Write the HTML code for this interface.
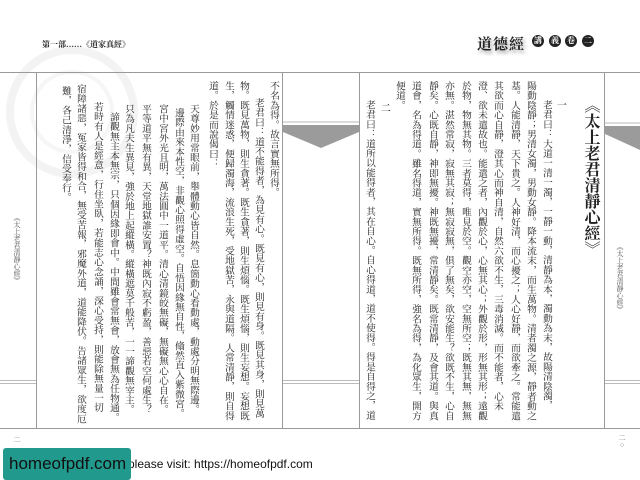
<!DOCTYPE html>
<html><head><meta charset="utf-8"><style>
html,body{margin:0;padding:0;background:#fff;}
body{width:640px;height:480px;position:relative;overflow:hidden;font-family:"Liberation Serif","Noto Serif CJK SC",serif;color:#222;}
.c{position:absolute;writing-mode:vertical-rl;font-size:9.7px;line-height:10px;width:10px;white-space:nowrap;letter-spacing:0;}
.ln{position:absolute;background:#9a9a9a;}
.circ{position:absolute;width:12px;height:12px;border-radius:50%;background:#222;color:#fff;font-size:8px;line-height:12px;text-align:center;top:35px;font-weight:bold;}
</style></head><body>
<svg style="position:absolute;left:0;top:0" width="640" height="480">
<circle cx="72" cy="112" r="62" fill="none" stroke="#f3f3f3" stroke-width="8"/>
<circle cx="72" cy="112" r="40" fill="none" stroke="#f6f6f6" stroke-width="4"/>
<rect x="283" y="121" width="76" height="2" fill="#dcdcdc"/>
<polygon points="283,125 359,125 359,132 321,148 283,132" fill="#9b9b9b"/>
<rect x="605" y="122" width="35" height="2" fill="#dcdcdc"/>
<polygon points="605,126 640,126 640,150 605,134" fill="#9b9b9b"/>
<rect x="283" y="380" width="76" height="1" fill="#bbb"/>
<rect x="283" y="383" width="76" height="1" fill="#bbb"/>
<rect x="0" y="380" width="36" height="1" fill="#bbb"/>
<rect x="0" y="383" width="36" height="1" fill="#bbb"/>
<rect x="605" y="380" width="35" height="1" fill="#bbb"/>
<rect x="605" y="383" width="35" height="1" fill="#bbb"/>
</svg>
<div class="ln" style="left:0;top:72px;width:640px;height:1px"></div>
<div class="ln" style="left:0;top:428px;width:640px;height:1px"></div>
<div class="ln" style="left:36px;top:72px;width:1px;height:356px"></div>
<div class="ln" style="left:282px;top:72px;width:1px;height:356px"></div>
<div class="ln" style="left:359px;top:72px;width:1px;height:356px"></div>
<div class="ln" style="left:604px;top:72px;width:1px;height:356px"></div>

<div style="position:absolute;left:42px;top:39px;font-size:8px;font-weight:bold;white-space:nowrap">第一部……《道家真經》</div>
<div style="position:absolute;left:477px;top:33px;font-size:15px;font-weight:bold;letter-spacing:1px;white-space:nowrap;text-shadow:2px 3px 3px #aaa">道德經</div>
<div class="circ" style="left:532px">講</div>
<div class="circ" style="left:549px">義</div>
<div class="circ" style="left:565px">卷</div>
<div class="circ" style="left:582px">二</div>

<div class="c" style="left:581px;top:97px;font-size:16px;line-height:18px;width:18px;font-weight:bold">《太上老君清靜心經》</div>
<div class="c" style="left:555px;top:100px;font-weight:bold">一</div>
<div class="c" style="left:541px;top:100px">老君曰：大道一清一濁，一靜一動，清靜為本，濁動為末，故陽清陰濁，</div>
<div class="c" style="left:525px;top:81px">陽動陰靜；男清女濁，男動女靜。降本流末，而生萬物。清者濁之源，靜者動之</div>
<div class="c" style="left:509px;top:81px">基。人能清靜，天下貴之。人神好清，而心擾之；人心好靜，而欲牽之。常能遣</div>
<div class="c" style="left:492px;top:81px">其欲而心自靜，澄其心而神自清，自然六欲不生，三毒消滅。而不能者，心未</div>
<div class="c" style="left:476px;top:81px">澄、欲未遣故也。能遣之者，內觀於心，心無其心；外觀於形，形無其形；遠觀</div>
<div class="c" style="left:460px;top:81px">於物，物無其物。三者莫得，唯見於空。觀空亦空，空無所空；既無其無，無無</div>
<div class="c" style="left:443px;top:81px">亦無。湛然常寂，寂無其寂；無寂寂無，俱了無矣，欲安能生？欲既不生，心自</div>
<div class="c" style="left:427px;top:81px">靜矣。心既自靜，神即無擾。神既無擾，常清靜矣。既常清靜，及會其道。與真</div>
<div class="c" style="left:410px;top:81px">道會，名為得道。雖名得道，實無所得。既無所得，強名為得，為化眾生，開方</div>
<div class="c" style="left:394px;top:81px">便道。</div>
<div class="c" style="left:379px;top:103px;font-weight:bold">二</div>
<div class="c" style="left:364px;top:100px">老君曰：道所以能得者，其在自心。自心得道，道不使得。得是自得之，道</div>

<div class="c" style="left:268px;top:81px">不名為得。故言實無所得。</div>
<div class="c" style="left:253px;top:98px">老君曰：道不能得者，為見有心。既見有心，則見有身。既見其身，則見萬</div>
<div class="c" style="left:238px;top:81px">物。既見萬物，則生貪著。既生貪著，則生煩惱。既生煩惱，則生妄想。妄想既</div>
<div class="c" style="left:223px;top:81px">生，觸情迷惑，便歸濁海，流浪生死，受地獄苦，永與道隔。人常清靜，則自得</div>
<div class="c" style="left:207px;top:81px">道。於是而說偈曰：</div>
<div class="c" style="left:188px;top:104px">天尊妙用常眼前，舉體動心皆自然。息箇動心看動處，動處分明無際邊。</div>
<div class="c" style="left:173px;top:108px">邊際由來本性空，非觀心照得虛空。自悟因緣無自性，翛然直入紫微宮。</div>
<div class="c" style="left:157px;top:104px">宮中宮外光且明，萬法圓中一道平。清心清鏡皎無礙，無礙無心心自在。</div>
<div class="c" style="left:140px;top:104px">平等道平無有異，天堂地獄誰安置？神既內寂不虧盈，善惡若空何處生？</div>
<div class="c" style="left:123px;top:104px">只為凡夫生異見，強於地上起縱橫。縱橫遮莫千般苦，一一諦觀無宰主。</div>
<div class="c" style="left:108px;top:112px">諦觀無主本無宗，只個因緣即會中。中間雖會常無會，放會無為任物通。</div>
<div class="c" style="left:92px;top:102px">若時有人是經意，行住坐臥，若能志心念誦，深心受持，則能除無量一切</div>
<div class="c" style="left:75px;top:84px">宿障諸惡，冤家皆得和合，無受苦報，邪魔外道，道能降伏。告諸眾生，欲度厄</div>
<div class="c" style="left:60px;top:86px">難，各己清淨，信受奉行。</div>

<div class="c" style="left:616px;top:243px;font-size:7px;line-height:8px;width:8px;color:#555">《太上老君清靜心經》</div>
<div class="c" style="left:13px;top:214px;font-size:7px;line-height:8px;width:8px;color:#555">《太上老君清靜心經》</div>
<div class="c" style="left:13px;top:436px;font-size:7px;line-height:8px;width:8px;color:#777">二</div>
<div class="c" style="left:618px;top:434px;font-size:7px;line-height:8px;width:8px;color:#777">二○</div>

<div style="position:absolute;left:128px;top:457px;font-family:'Liberation Sans',sans-serif;font-size:12px;color:#111;white-space:nowrap">please visit: https://homeofpdf.com</div>
<div style="position:absolute;left:3px;top:448px;width:128px;height:32px;background:#21998d;border-radius:3px;font-family:'Liberation Sans',sans-serif;font-size:17px;line-height:32px;color:#111;padding-left:6px;box-sizing:border-box">homeofpdf.com</div>
</body></html>
